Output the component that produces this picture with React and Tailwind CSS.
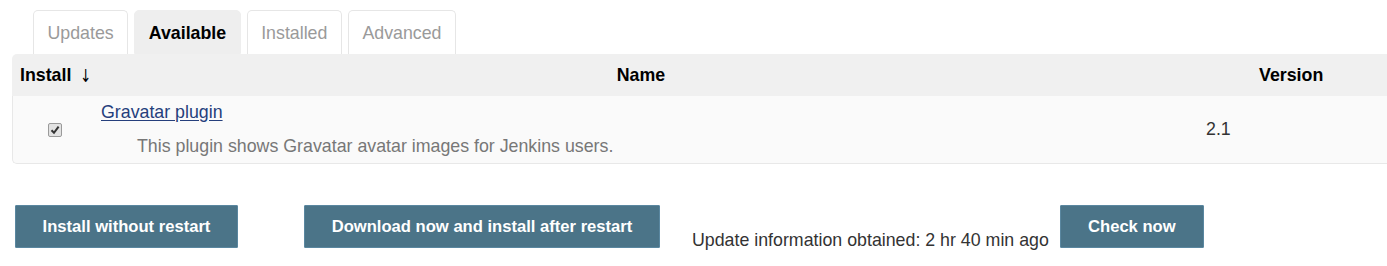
import React from "react";

const tabs = ["Updates", "Available", "Installed", "Advanced"];

function Tab({ label, active }) {
  return (
    <div
      className={
        active
          ? "h-[44px] px-[13.5px] flex items-center pt-[2px] rounded-t-[5px] bg-[#eeeeee] border border-[#eeeeee] font-bold text-black"
          : "h-[44px] px-[13.5px] flex items-center pt-[2px] rounded-t-[5px] bg-white border border-b-0 border-[#e6e6e6] text-[#9a9a9a]"
      }
    >
      {label}
    </div>
  );
}

function Button({ children, className }) {
  return (
    <button
      className={
        "h-[43px] pt-[2px] bg-[#4b7488] border border-[#5a87a0] text-white font-bold text-[16.6px] leading-none rounded-[1px] " +
        className
      }
    >
      {children}
    </button>
  );
}

export default function App() {
  return (
    <div className="w-[1387px] h-[266px] bg-white overflow-hidden text-[17.8px] font-['Liberation_Sans',Arial,sans-serif] text-[#333]">
      {/* tabs */}
      <div className="flex gap-[6px] pl-[33px] pt-[10px]">
        {tabs.map((t) => (
          <Tab key={t} label={t} active={t === "Available"} />
        ))}
      </div>

      {/* plugin table */}
      <div className="ml-[12px] w-[1380px]">
        <div className="flex h-[42px] items-center bg-[#f0f0f0] rounded-tl-[5px] font-bold text-black">
          <div className="w-[88px] pl-[8px] flex items-center">
            Install
            <span className="ml-[7px] font-normal font-['DejaVu_Sans',sans-serif] text-[18px] scale-x-75">↓</span>
          </div>
          <div className="flex-1 text-center">Name</div>
          <div className="w-[210px] pl-[77px]">Version</div>
        </div>
        <div className="flex h-[68px] bg-[#fafafa] border-l border-b border-[#e8e8e8] rounded-bl-[5px]">
          <div className="w-[88px] flex items-center pl-[35px]">
            <span className="w-[14px] h-[14px] rounded-[2px] border border-[#9a9a9a] bg-[#e2e2e2] flex items-center justify-center">
              <svg width="10" height="10" viewBox="0 0 10 10">
                <path d="M1.5 5.2 L4 7.8 L8.6 1.6" fill="none" stroke="#333" strokeWidth="2" />
              </svg>
            </span>
          </div>
          <div className="flex-1 pt-[4px]">
            <a href="#" className="block leading-[24px] text-[#253f7c] underline underline-offset-[2px] w-fit">
              Gravatar plugin
            </a>
            <div className="pl-[36px] mt-[10px] leading-[24px] text-[#777]">
              This plugin shows Gravatar avatar images for Jenkins users.
            </div>
          </div>
          <div className="w-[210px] flex items-center pl-[24px]">2.1</div>
        </div>
      </div>

      {/* actions */}
      <div className="flex items-start pl-[15px] mt-[41px]">
        <Button className="w-[223px]">Install without restart</Button>
        <Button className="w-[356px] ml-[66px]">Download now and install after restart</Button>
        <div className="ml-[32px] mt-[24px] leading-[22px]">Update information obtained: 2 hr 40 min ago</div>
        <Button className="w-[144px] ml-[11px]">Check now</Button>
      </div>
    </div>
  );
}
